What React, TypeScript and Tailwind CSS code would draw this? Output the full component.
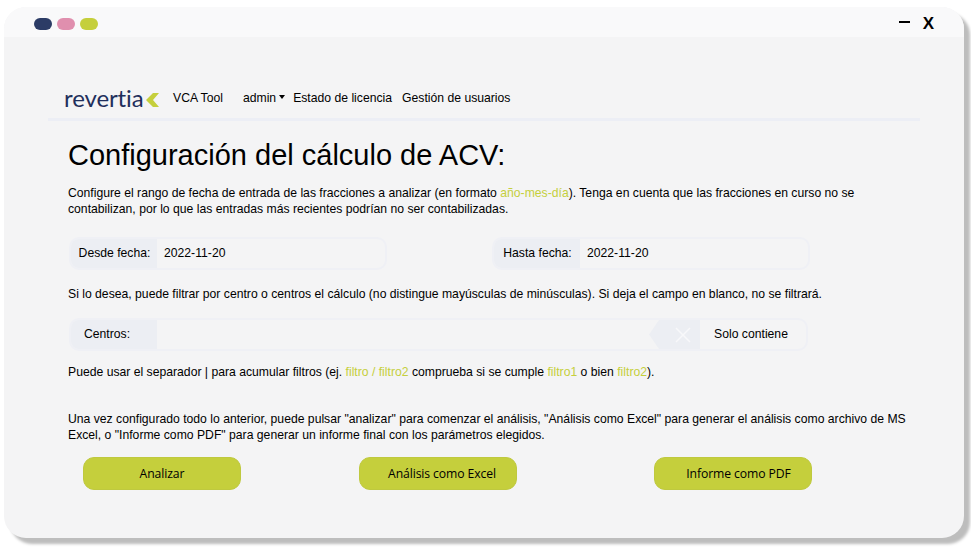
const Green = ({ children }: { children: string }) => (
  <span className="text-[#c5cf3c]">{children}</span>
);

const DateField = ({ label, value }: { label: string; value: string }) => {
  return (
    <div className="flex h-[33px] w-[318px] overflow-hidden rounded-[10px] border-2 border-[#eff0f5]">
      <div className="flex w-[86px] items-center justify-center bg-[#eceef3] pl-px text-[12.2px]">{label}</div>
      <div className="flex flex-1 items-center pl-[7px] text-[12.2px]">{value}</div>
    </div>
  );
};

const ActionButton = ({ label, pad }: { label: string; pad: string }) => (
  <button className={`h-[33px] w-[158px] rounded-[11px] border border-[#bfc93f] bg-[#c5cf3c] pt-px ${pad} text-[12.2px] font-medium font-['Open_Sans',sans-serif] tracking-[-0.1px] text-black`}>
    {label}
  </button>
);

export default function App() {
  return (
    <div className="h-[547px] w-[971px] overflow-hidden bg-white pl-1 pt-[7px] font-['Liberation_Sans',sans-serif] text-black">
      <div className="h-[531px] w-[960px] overflow-hidden rounded-[22px] bg-[#f4f4f5] shadow-[6px_6px_3px_#bdbdbd]">
        {/* title bar */}
        <div className="flex h-[30px] items-center justify-between bg-[#f9f9fa] pl-[30px] pr-[30px] pt-[3px]">
          <div className="flex gap-[5px]">
            <div className="h-3 w-[18px] rounded-full bg-[#2c3c66]" />
            <div className="h-3 w-[18px] rounded-full bg-[#e08fae]" />
            <div className="h-3 w-[18px] rounded-full bg-[#c5cf3c]" />
          </div>
          <div className="flex items-center gap-[13px]">
            <div className="mb-[3px] h-[2px] w-[11px] bg-black" />
            <span className="text-[17px] font-bold leading-none">X</span>
          </div>
        </div>

        {/* nav */}
        <div className="ml-[44px] mr-[44px] mt-[47px] border-b-[3px] border-[#eceef5] pb-[6px] pl-[16px]">
          <div className="flex h-[28px] items-center text-[12.2px]">
            <span className="w-[82px] font-['Lato',sans-serif] text-[24px] leading-none tracking-[-0.1px] text-[#1f2f5c]">revertia</span>
            <svg width="13" height="14" viewBox="0 0 13 14" className="mt-[3px]">
              <path d="M7 0h6L7 7l6 7H7L0 7z" fill="#c5cf3c" />
            </svg>
            <span className="ml-[14px]">VCA Tool</span>
            <span className="ml-[20px]">admin</span>
            <svg width="6" height="4" viewBox="0 0 6 4" className="mb-[3px] ml-[3px]">
              <path d="M0 0h6L3 4z" fill="#000" />
            </svg>
            <span className="ml-[8px]">Estado de licencia</span>
            <span className="ml-[10px]">Gestión de usuarios</span>
          </div>
        </div>

        <div className="pl-[64px] pr-[40px]">
          <h1 className="mt-[16px] text-[29px] leading-[36px]">Configuración del cálculo de ACV:</h1>
          <p className="mt-[13px] text-[12.2px] leading-[15.5px]">
            Configure el rango de fecha de entrada de las fracciones a analizar (en formato <Green>año-mes-día</Green>). Tenga en cuenta que las fracciones en curso no se
            <br />
            contabilizan, por lo que las entradas más recientes podrían no ser contabilizadas.
          </p>

          <div className="ml-px mt-[20px] flex gap-[105px]">
            <DateField label="Desde fecha:" value="2022-11-20" />
            <DateField label="Hasta fecha:" value="2022-11-20" />
          </div>

          <p className="mt-[16px] text-[12.2px] leading-[16px]">
            Si lo desea, puede filtrar por centro o centros el cálculo (no distingue mayúsculas de minúsculas). Si deja el campo en blanco, no se filtrará.
          </p>

          <div className="ml-px mt-[16px] flex h-[33px] w-[739px] overflow-hidden rounded-[10px] border-2 border-[#eff0f5] text-[12.2px]">
            <div className="flex w-[86px] items-center bg-[#eceef3] pl-[13px]">Centros:</div>
            <div className="flex-1" />
            <svg width="51" height="29" viewBox="0 0 51 29" className="shrink-0">
              <path d="M10 0h41v29H10L0 14.5z" fill="#eceef3" />
              <path d="M27 8l14 14M41 8L27 22" stroke="#f8f8fa" strokeWidth="1.5" />
            </svg>
            <div className="flex w-[106px] items-center justify-center pr-[4px]">Solo contiene</div>
          </div>

          <p className="mt-[13px] text-[12.2px] leading-[16px]">
            Puede usar el separador | para acumular filtros (ej. <Green>filtro / filtro2</Green> comprueba si se cumple <Green>filtro1</Green> o bien <Green>filtro2</Green>).
          </p>

          <p className="mt-[32px] text-[12.2px] leading-[15.5px]">
            Una vez configurado todo lo anterior, puede pulsar "analizar" para comenzar el análisis, "Análisis como Excel" para generar el análisis como archivo de MS
            <br />
            Excel, o "Informe como PDF" para generar un informe final con los parámetros elegidos.
          </p>

          <div className="ml-[15px] mt-[14px] flex">
            <ActionButton label="Analizar" pad="pl-0" />
            <div className="ml-[118px]"><ActionButton label="Análisis como Excel" pad="pl-[8px]" /></div>
            <div className="ml-[137px]"><ActionButton label="Informe como PDF" pad="pl-[11px]" /></div>
          </div>
        </div>
      </div>
    </div>
  );
}
